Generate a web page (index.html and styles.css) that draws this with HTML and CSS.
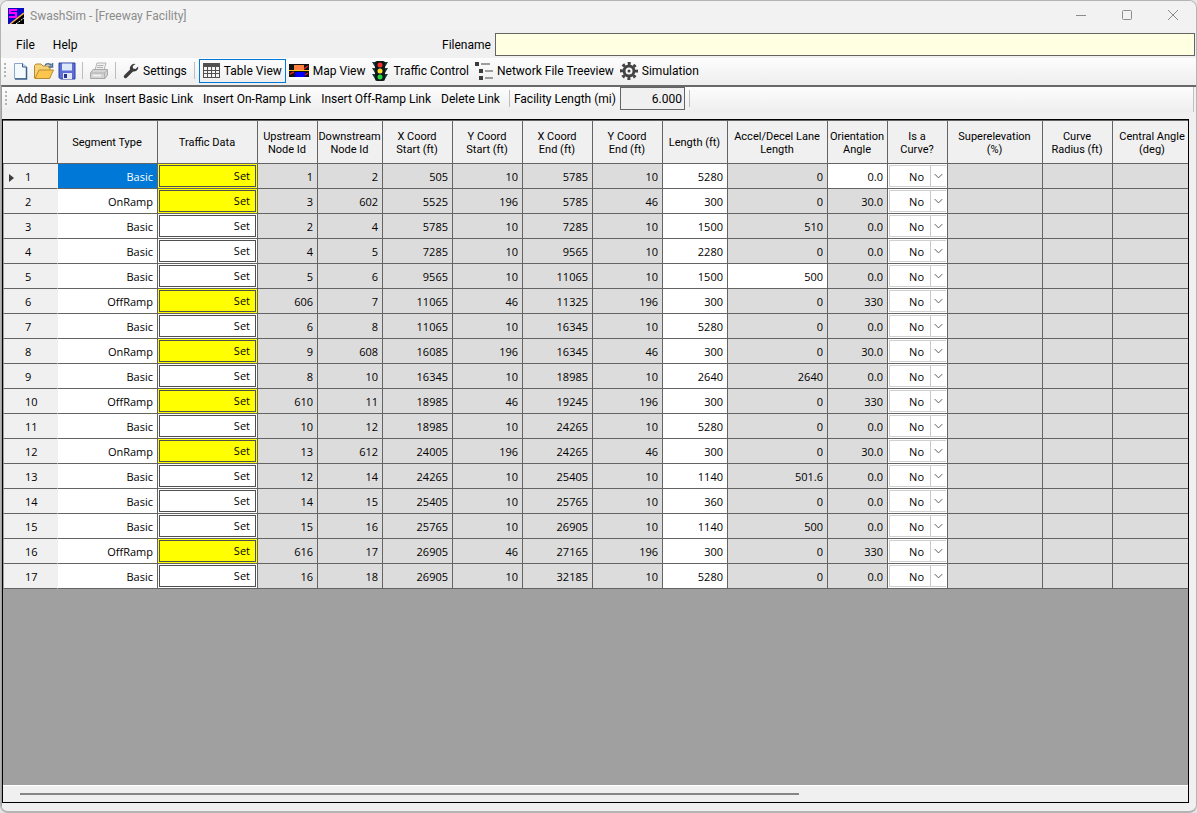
FILE: index.html
```html
<!DOCTYPE html>
<html lang="en">
<head>
  <meta charset="UTF-8">
  <meta name="viewport" content="width=device-width, initial-scale=1.0">
  <title>SwashSim - [Freeway Facility]</title>
  <link rel="stylesheet" href="styles.css">
</head>

<body>
<div class="window">
  <header class="titlebar">
    <svg class="app-icon" width="16" height="16" viewBox="0 0 16 16">
      <rect width="16" height="16" fill="#0808c8"/>
      <path d="M16 5v11H3z" fill="#000"/>
      <path d="M2 16L16 5" stroke="#ffb43c" stroke-width="1.500"/>
      <path d="M8 16L16 10" stroke="#fff" stroke-width="1" stroke-dasharray="2 1"/>
      <path d="M9 2H2v3h6v4H1" fill="none" stroke="#ff00ff" stroke-width="2"/>
    </svg>
    <h1>SwashSim - [Freeway Facility]</h1>
    <div class="window-buttons">
      <button type="button" aria-label="Minimize"><svg width="12" height="12" viewBox="0 0 12 12"><path d="M1 6.500h10"/></svg></button>
      <button type="button" aria-label="Maximize"><svg width="12" height="12" viewBox="0 0 12 12"><rect x="1.500" y="1.500" width="9" height="9" rx="1"/></svg></button>
      <button type="button" aria-label="Close"><svg width="12" height="12" viewBox="0 0 12 12"><path d="M1 1l10 10M11 1L1 11"/></svg></button>
    </div>
  </header>

  <div class="menu-row">
    <nav class="menu">
      <button type="button">File</button>
      <button type="button">Help</button>
    </nav>
    <label for="filename">Filename</label>
    <input type="text" id="filename" name="filename">
  </div>

  <div class="toolbar main-toolbar">
    <span class="grip"></span>
    <button type="button" class="icon-button" aria-label="New">
      <svg width="18" height="18" viewBox="0 0 18 18">
        <path d="M2.500 1.500h8l4 3.500v11.500h-12z" fill="#f4f9fe" stroke="#8aa6c8"/>
        <path d="M14.500 5v12H3" fill="none" stroke="#3c5f8c" stroke-width="1.500"/>
        <path d="M10.500 1.500V5h4" fill="#c4d8ee" stroke="#3c5f8c"/>
      </svg>
    </button>
    <button type="button" class="icon-button" aria-label="Open">
      <svg width="20" height="18" viewBox="0 0 20 18">
        <path d="M.5 16V3.500L2 2h5l2 2h7v12z" fill="#f6d27a" stroke="#b98a2c"/>
        <path d="M1 16.500L5 8h14.500l-4 8.500z" fill="#fcc64e" stroke="#b98a2c"/>
        <path d="M11 3.500c1-2.500 5-2.500 6.500 0M18.500 1v4h-4" fill="none" stroke="#4c6d94" stroke-width="1.500"/>
      </svg>
    </button>
    <button type="button" class="icon-button" aria-label="Save">
      <svg width="18" height="18" viewBox="0 0 18 18">
        <path d="M1 1h16v16H2.500L1 15.500z" fill="#5c6cd4" stroke="#3140a4"/>
        <path d="M4 1.500h10v7H4z" fill="#dbe8fa"/>
        <path d="M5 11h9v6H5z" fill="#e2e6f2"/>
        <path d="M6 12h3v4H6z" fill="#28348c"/>
      </svg>
    </button>
    <span class="separator"></span>
    <button type="button" class="icon-button" aria-label="Print" disabled>
      <svg width="20" height="18" viewBox="0 0 20 18">
        <path d="M6 8l2-7h9l-2 7z" fill="#f2f2f2" stroke="#b4b4b4"/>
        <path d="M1.500 11L4 7.500h14.500V13L16 16.500H1.500z" fill="#d4d4d4" stroke="#a8a8a8"/>
        <path d="M2 11h13.500l3-3M15.500 11v5M8.500 3.500h6M8 5.500h6" fill="none" stroke="#b0b0b0"/>
        <path d="M4 13.500h8" stroke="#f4f4f4" stroke-width="1.500"/>
      </svg>
    </button>
    <span class="separator"></span>
    <button type="button">
      <svg width="16" height="16" viewBox="0 0 16 16">
        <path d="M2.500 13.500L9 7" stroke="#3c3c3c" stroke-width="3.500" stroke-linecap="round"/>
        <path d="M12.500 1A4.500 4.500 0 0 0 7 6.500 4.500 4.500 0 0 0 15.200 3.600L12.500 6 10 5.500 9.800 3z" fill="#3c3c3c"/>
      </svg>
      Settings
    </button>
    <span class="separator"></span>
    <button type="button" class="active">
      <svg width="17" height="17" viewBox="0 0 17 17">
        <path d="M0 1h17v15H0z" fill="#505050"/>
        <path d="M1 5h3v3H1zM5 5h3v3H5zM9 5h3v3H9zM13 5h3v3h-3zM1 9h3v2H1zM5 9h3v2H5zM9 9h3v2H9zM13 9h3v2h-3zM1 12h3v3H1zM5 12h3v3H5zM9 12h3v3H9zM13 12h3v3h-3z" fill="#f4f4f4"/>
      </svg>
      Table View
    </button>
    <button type="button">
      <svg width="20" height="18" viewBox="0 0 20 18">
        <path d="M0 2h20v13H0z" fill="#111"/>
        <path d="M0 15h20v3H0z" fill="#fff"/>
        <path d="M0 8.500h20" stroke="#ffc81e"/>
        <path d="M5 3h10v5H5z" fill="#ff8040"/>
        <path d="M6 10h10v5H6z" fill="#0000ff"/>
        <path d="M1 12l4-2M15 7l4-3M16 13l3-2" stroke="#e02020" stroke-width="1.500"/>
      </svg>
      Map View
    </button>
    <button type="button">
      <svg width="18" height="20" viewBox="0 0 18 20">
        <path d="M1 1h16l-3 5H4zM1 7h16l-3 5H4zM1 13h16l-3 5H4z" fill="#1c3c3c"/>
        <rect x="4" width="10" height="20" rx="2" fill="#101818"/>
        <circle cx="9" cy="4" r="2.500" fill="#f03030"/>
        <circle cx="9" cy="10" r="2.500" fill="#ffe030"/>
        <circle cx="9" cy="16" r="2.500" fill="#20d840"/>
      </svg>
      Traffic Control
    </button>
    <button type="button">
      <svg width="18" height="18" viewBox="0 0 18 18">
        <path d="M0 0h4v4H0zM4 7h4v4H4zM4 14h4v4H4z" fill="#3c3c3c"/>
        <path d="M6 2h9M10 9h8M10 16h8" stroke="#808080" stroke-width="1.500"/>
      </svg>
      Network File Treeview
    </button>
    <button type="button">
      <svg width="18" height="18" viewBox="0 0 18 18">
        <circle cx="9" cy="9" r="7.500" fill="none" stroke="#444" stroke-width="3" stroke-dasharray="3 2.890" stroke-dashoffset="1.500"/>
        <circle cx="9" cy="9" r="5" fill="none" stroke="#444" stroke-width="3"/>
        <circle cx="9" cy="9" r="1.500" fill="#444"/>
      </svg>
      Simulation
    </button>
  </div>

  <main class="facility">
    <div class="toolbar link-toolbar">
      <span class="grip"></span>
      <button type="button">Add Basic Link</button>
      <button type="button">Insert Basic Link</button>
      <button type="button">Insert On-Ramp Link</button>
      <button type="button">Insert Off-Ramp Link</button>
      <button type="button">Delete Link</button>
      <span class="separator"></span>
      <label for="facility-length">Facility Length (mi)</label>
      <input type="text" id="facility-length" value="6.000" readonly>
      <span class="separator"></span>
    </div>

    <div class="grid">
      <div class="grid-view">
        <table>
          <colgroup>
            <col class="w55"><col class="w100"><col class="w100"><col class="w60"><col class="w65">
            <col class="w70"><col class="w70"><col class="w70"><col class="w70"><col class="w65">
            <col class="w100"><col class="w60"><col class="w60"><col class="w95"><col class="w70"><col class="w80">
          </colgroup>
          <thead>
            <tr>
              <td></td>
              <th>Segment Type</th>
              <th>Traffic Data</th>
              <th>Upstream<br>Node Id</th>
              <th>Downstream<br>Node Id</th>
              <th>X Coord<br>Start (ft)</th>
              <th>Y Coord<br>Start (ft)</th>
              <th>X Coord<br>End (ft)</th>
              <th>Y Coord<br>End (ft)</th>
              <th>Length (ft)</th>
              <th>Accel/Decel Lane<br>Length</th>
              <th>Orientation<br>Angle</th>
              <th>Is a<br>Curve?</th>
              <th>Superelevation<br>(%)</th>
              <th>Curve<br>Radius (ft)</th>
              <th>Central Angle<br>(deg)</th>
            </tr>
          </thead>
          <tbody id="links"></tbody>
        </table>
      </div>
      <div class="scrollbar"><div class="thumb"></div></div>
    </div>
  </main>
</div>

<script src="script.js"></script>
</body>
</html>
```
FILE: styles.css
```css
* {
  box-sizing: border-box;
}
body {
  margin: 0;
  background: #e4e4e4;
  color: #000;
  font-family: Roboto, "Open Sans", sans-serif;
  font-size: 12px;
}
button, input, select {
  font: inherit;
  color: inherit;
}
button {
  padding: 0;
  border: none;
  background: none;
  white-space: nowrap;
}
.window {
  display: flex;
  flex-direction: column;
  height: 100vh;
  border: 1px solid #b4b4b4;
  border-bottom-width: 2px;
  border-radius: 8px;
  background: #f0f0f0;
  overflow: hidden;
}

/* title bar */
.titlebar {
  display: flex;
  align-items: center;
  height: 30px;
  padding-left: 7px;
  background: #f2f2f2;
  color: #8c8c8c;
}
.titlebar h1 {
  flex: 1;
  margin: 0 0 0 6px;
  font-size: 12px;
  font-weight: normal;
}
.window-buttons {
  display: flex;
}
.window-buttons button {
  width: 46px;
  height: 28px;
}
.window-buttons svg {
  fill: none;
  stroke: #8c8c8c;
}

/* menu and file name */
.menu-row {
  display: flex;
  align-items: center;
  height: 27px;
}
.menu {
  display: flex;
  flex: 0 0 441px;
  gap: 18px;
  padding-left: 15px;
}
#filename {
  flex: 1;
  height: 23px;
  margin: 0 1px 0 4px;
  border: 1px solid #646464;
  background: #ffffe1;
}

/* toolbars */
.toolbar {
  display: flex;
  align-items: center;
  background: linear-gradient(#fdfdfd, #eeeeee);
  white-space: nowrap;
}
.toolbar button {
  display: flex;
  align-items: center;
  gap: 4px;
}
.main-toolbar {
  height: 27px;
  padding: 0 0 2px 3px;
}
.main-toolbar button {
  height: 24px;
  padding: 0 3px;
}
.main-toolbar .icon-button {
  padding: 0 2px;
}
.main-toolbar .active {
  border: 1px solid #0078d7;
}
.grip {
  width: 2px;
  height: 16px;
  margin-right: 4px;
  background: repeating-linear-gradient(#b4b4b4 0 2px, transparent 2px 4px);
}
.separator {
  width: 1px;
  height: 17px;
  margin: 0 4px;
  background: #bdbdbd;
}
.facility {
  display: flex;
  flex: 1;
  flex-direction: column;
  min-height: 0;
  padding: 0 7px 8px 0;
  border-top: 2px solid #696969;
  border-left: 1px solid #a0a0a0;
}
.link-toolbar {
  height: 25px;
  margin: 0 -5px 7px 0;
  padding: 0 0 2px 3px;
  border-right: 1px solid #c0c0c0;
}
.link-toolbar button {
  margin: 0 5px;
}
#facility-length {
  width: 65px;
  height: 23px;
  padding: 0 2px;
  margin-left: 4px;
  border: 1px solid #646464;
  background: #f0f0f0;
  text-align: right;
}

/* segment grid */
.grid {
  display: flex;
  flex: 1;
  flex-direction: column;
  min-height: 0;
  border: 1px solid #000;
  background: #a0a0a0;
}
.grid-view {
  flex: 1;
  overflow: hidden;
  border-top: 1px solid #646464;
}
table {
  width: 1190px;
  table-layout: fixed;
  border-spacing: 0;
  font-size: 11px;
}
.w55 { width: 55px; }
.w60 { width: 60px; }
.w65 { width: 65px; }
.w70 { width: 70px; }
.w80 { width: 80px; }
.w95 { width: 95px; }
.w100 { width: 100px; }
thead th, thead td {
  height: 43px;
  padding: 1px 1px 0 0;
  border-right: 1px solid #646464;
  border-bottom: 1px solid #646464;
  background: #f0f0f0;
  font-weight: normal;
  line-height: 13px;
  white-space: nowrap;
}
tbody th, tbody td {
  height: 25px;
  padding: 2px 4px 0;
  border-right: 1px solid #646464;
  border-bottom: 1px solid #646464;
  background: #dcdcdc;
  font-family: "Open Sans", sans-serif;
  text-align: right;
  line-height: 16px;
}
tbody th {
  padding-left: 21px;
  border-left: 1px solid #a0a0a0;
  border-right-color: #f0f0f0;
  background: #f0f0f0;
  font-weight: normal;
  text-align: left;
}
tbody .current {
  padding-left: 5px;
}
.current::before {
  content: "";
  display: inline-block;
  margin-right: 11px;
  border: 4px solid transparent;
  border-left: 5px solid #3c3c3c;
  border-right: none;
  vertical-align: middle;
}
tbody .editable {
  background: #fff;
}
tbody .selected {
  background: #0078d7;
  color: #fff;
}
tbody .button-cell, tbody .combo-cell {
  padding: 1px;
  background: #fff;
}
tbody .needs-data {
  background: #ffff00;
}
.button-cell button {
  display: block;
  width: 100%;
  height: 22px;
  padding-right: 5px;
  border: 1px solid #505050;
  text-align: right;
}
.combo {
  display: flex;
  height: 22px;
  border: 1px solid #d0d0d0;
  border-right: none;
}
.combo select {
  flex: 1;
  min-width: 0;
  padding: 1px 6px 0 0;
  border: none;
  appearance: none;
  background: #fff;
  text-align: right;
  text-align-last: right;
}
.combo svg {
  width: 16px;
  height: 20px;
  border-left: 1px solid #c8c8c8;
  fill: none;
  stroke: #505050;
}

/* horizontal scroll bar */
.scrollbar {
  display: flex;
  align-items: center;
  height: 17px;
  padding: 0 23px 0 17px;
  border-top: 1px solid #fff;
  background: #f0f0f0;
}
.thumb {
  width: 68%;
  height: 2px;
  background: #868686;
}
```
FILE: script.js
```js
// type, data entered, up node, down node, x start, y start, x end, y end, length, lane length, angle
const links = [
  ["Basic", false, 1, 2, 505, 10, 5785, 10, 5280, "0", "0.0"],
  ["OnRamp", false, 3, 602, 5525, 196, 5785, 46, 300, "0", "30.0"],
  ["Basic", true, 2, 4, 5785, 10, 7285, 10, 1500, "510", "0.0"],
  ["Basic", true, 4, 5, 7285, 10, 9565, 10, 2280, "0", "0.0"],
  ["Basic", true, 5, 6, 9565, 10, 11065, 10, 1500, "500", "0.0"],
  ["OffRamp", false, 606, 7, 11065, 46, 11325, 196, 300, "0", "330"],
  ["Basic", true, 6, 8, 11065, 10, 16345, 10, 5280, "0", "0.0"],
  ["OnRamp", false, 9, 608, 16085, 196, 16345, 46, 300, "0", "30.0"],
  ["Basic", true, 8, 10, 16345, 10, 18985, 10, 2640, "2640", "0.0"],
  ["OffRamp", false, 610, 11, 18985, 46, 19245, 196, 300, "0", "330"],
  ["Basic", true, 10, 12, 18985, 10, 24265, 10, 5280, "0", "0.0"],
  ["OnRamp", false, 13, 612, 24005, 196, 24265, 46, 300, "0", "30.0"],
  ["Basic", true, 12, 14, 24265, 10, 25405, 10, 1140, "501.6", "0.0"],
  ["Basic", true, 14, 15, 25405, 10, 25765, 10, 360, "0", "0.0"],
  ["Basic", true, 15, 16, 25765, 10, 26905, 10, 1140, "500", "0.0"],
  ["OffRamp", false, 616, 17, 26905, 46, 27165, 196, 300, "0", "330"],
  ["Basic", true, 16, 18, 26905, 10, 32185, 10, 5280, "0", "0.0"],
];

const rows = links.map((link, i) => {
  const [type, hasData, ...values] = link;
  const cells = values.map((value, col) => {
    // length is always editable, the first angle and the lane length of link 5 too
    const editable = col === 6 || (i === 0 && col === 8) || (i === 4 && col === 7);
    return `<td class="${editable ? "editable" : ""}">${value}</td>`;
  }).join("");

  return `<tr>
    <th class="${i === 0 ? "current" : ""}">${i + 1}</th>
    <td class="${i === 0 ? "selected" : "editable"}">${type}</td>
    <td class="button-cell ${hasData ? "" : "needs-data"}"><button type="button">Set</button></td>
    ${cells}
    <td class="combo-cell"><div class="combo">
      <select aria-label="Is link ${i + 1} a curve?"><option>No</option><option>Yes</option></select>
      <svg viewBox="0 0 16 20"><path d="M4 8l4 4 4-4"/></svg>
    </div></td>
    <td></td><td></td><td></td>
  </tr>`;
}).join("\n");

document.getElementById("links").innerHTML = rows;
```
